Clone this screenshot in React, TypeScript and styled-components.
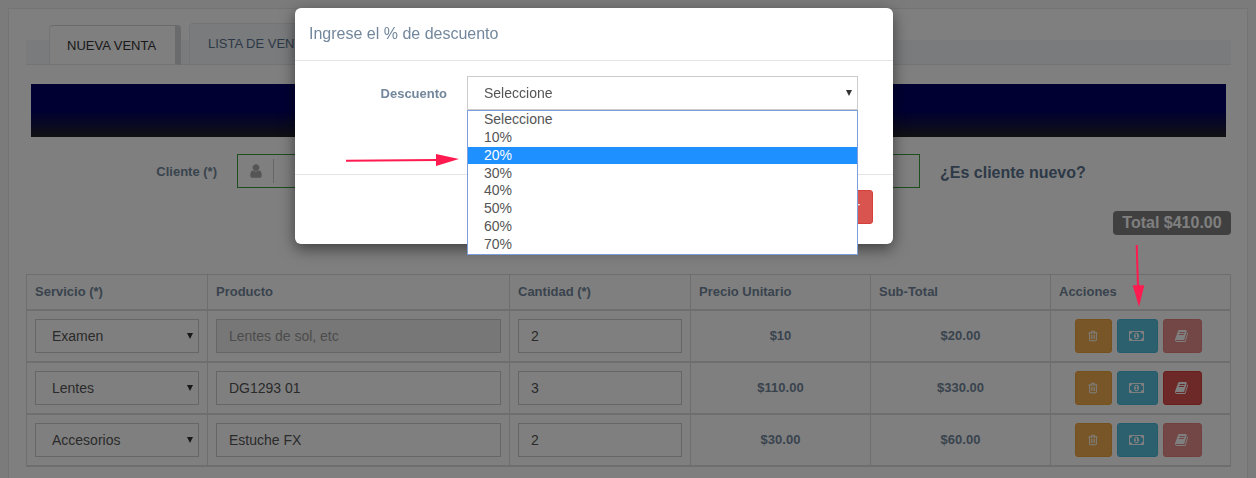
import styled, { createGlobalStyle } from 'styled-components';

const GlobalStyle = createGlobalStyle`
  html, body {
    margin: 0;
    height: 100%;
    overflow: hidden;
    background: #f7f7f7;
    color: #73879c;
    font-family: "Liberation Sans", Arial, sans-serif;
    font-size: 13px;
  }
`;

const rows = [
  { servicio: 'Examen', producto: '', cantidad: '2', precio: '$10', sub: '$20.00', locked: true },
  { servicio: 'Lentes', producto: 'DG1293 01', cantidad: '3', precio: '$110.00', sub: '$330.00', locked: false },
  { servicio: 'Accesorios', producto: 'Estuche FX', cantidad: '2', precio: '$30.00', sub: '$60.00', locked: true },
];

const opciones = ['Seleccione', '10%', '20%', '30%', '40%', '50%', '60%', '70%'];

function TrashIcon() {
  return (
    <Icon viewBox="0 0 1792 1792" width="12" height="12">
      <path d="M704 736v576q0 14-9 23t-23 9h-64q-14 0-23-9t-9-23v-576q0-14 9-23t23-9h64q14 0 23 9t9 23zm256 0v576q0 14-9 23t-23 9h-64q-14 0-23-9t-9-23v-576q0-14 9-23t23-9h64q14 0 23 9t9 23zm256 0v576q0 14-9 23t-23 9h-64q-14 0-23-9t-9-23v-576q0-14 9-23t23-9h64q14 0 23 9t9 23zm128 724v-948h-896v948q0 22 7 40.5t14.5 27 10.5 8.5h832q3 0 10.5-8.5t14.5-27 7-40.5zm-672-1076h448l-48-117q-7-9-17-11h-317q-10 2-17 11zm928 32v64q0 14-9 23t-23 9h-96v948q0 83-47 143.5t-113 60.5h-832q-66 0-113-58.5t-47-141.5v-952h-96q-14 0-23-9t-9-23v-64q0-14 9-23t23-9h309l70-167q15-37 54-63t79-26h320q40 0 79 26t54 63l70 167h309q14 0 23 9t9 23z" />
    </Icon>
  );
}

function MoneyIcon() {
  return (
    <Icon viewBox="0 0 2048 1792" width="16" height="14">
      <path d="M768 1152h384v-96h-128v-448h-114l-148 137 77 80q42-37 55-57h2v288h-128v96zm512-256q0 70-21 142t-59.5 134-101.5 101.5-138 39.5-138-39.5-101.5-101.5-59.5-134-21-142 21-142 59.5-134 101.5-101.5 138-39.5 138 39.5 101.5 101.5 59.5 134 21 142zm512 256v-512q-106 0-181-75t-75-181h-1152q0 106-75 181t-181 75v512q106 0 181 75t75 181h1152q0-106 75-181t181-75zm128-832v1152q0 26-19 45t-45 19h-1792q-26 0-45-19t-19-45v-1152q0-26 19-45t45-19h1792q26 0 45 19t19 45z" />
    </Icon>
  );
}

function BookIcon() {
  return (
    <Icon viewBox="0 0 1792 1792" width="14" height="14">
      <path d="M1639 478q40 57 18 129l-275 906q-19 64-76.5 107.5t-122.5 43.5h-923q-77 0-148.5-53.5t-99.5-131.5q-24-67-2-127 0-4 3-27t4-37q1-8-3-21.5t-3-19.5q2-11 8-21t16.5-23.5 16.5-23.5q23-38 45-91.5t30-91.5q3-10 .5-30t-.5-28q3-11 17-28t17-23q21-36 42-92t25-90q1-9-2.5-32t.5-28q4-13 22-30.5t22-22.5q19-26 42.5-84.5t27.5-96.5q1-8-3-25.5t-2-26.5q2-8 9-18t18-23 17-21q8-12 16.5-30.5t15-35 16-36 19.5-32 26.5-23.5 36-11.5 47.5 5.5l-1 3q38-9 51-9h761q74 0 114 56t18 130l-274 906q-36 119-71.5 153.5t-128.5 34.5h-869q-27 0-38 15-11 16-1 43 24 70 144 70h923q29 0 56-15.5t35-41.5l300-987q7-22 5-57 38 15 59 43zm-1064 2q-4 13 2 22.5t20 9.5h608q13 0 25.5-9.5t16.5-22.5l21-64q4-13-2-22.5t-20-9.5h-608q-13 0-25.5 9.5t-16.5 22.5zm-83 256q-4 13 2 22.5t20 9.5h608q13 0 25.5-9.5t16.5-22.5l21-64q4-13-2-22.5t-20-9.5h-608q-13 0-25.5 9.5t-16.5 22.5z" />
    </Icon>
  );
}

export default function App() {
  return (
    <>
      <GlobalStyle />
      <Panel>
        <TabBar>
          <ActiveTab>NUEVA VENTA</ActiveTab>
          <Tab>LISTA DE VENTAS</Tab>
        </TabBar>
        <Banner />
        <ClientRow>
          <ClientLabel>Cliente (*)</ClientLabel>
          <ClientGroup>
            <ClientAddon>
              <Icon viewBox="0 0 1792 1792" width="16" height="16">
                <path d="M1536 1399q0 109-62.5 187t-150.5 78h-854q-88 0-150.5-78t-62.5-187q0-85 8.5-160.5t31.5-152 58.5-131 94-89 134.5-34.5q131 128 313 128t313-128q76 0 134.5 34.5t94 89 58.5 131 31.5 152 8.5 160.5zm-256-887q0 159-112.5 271.5t-271.5 112.5-271.5-112.5-112.5-271.5 112.5-271.5 271.5-112.5 271.5 112.5 112.5 271.5z" />
              </Icon>
            </ClientAddon>
          </ClientGroup>
          <NewClient>¿Es cliente nuevo?</NewClient>
        </ClientRow>
        <TotalRow>
          <TotalBadge>Total $410.00</TotalBadge>
        </TotalRow>
        <Table>
          <colgroup>
            <col width="181" />
            <col width="302" />
            <col width="181" />
            <col width="180" />
            <col width="180" />
            <col width="180" />
          </colgroup>
          <thead>
            <tr>
              <Th>Servicio (*)</Th>
              <Th>Producto</Th>
              <Th>Cantidad (*)</Th>
              <Th>Precio Unitario</Th>
              <Th>Sub-Total</Th>
              <Th>Acciones</Th>
            </tr>
          </thead>
          <tbody>
            {rows.map((row) => (
              <tr key={row.servicio}>
                <Td>
                  <SelectBox>
                    <FieldSelect defaultValue={row.servicio}>
                      <option>{row.servicio}</option>
                    </FieldSelect>
                  </SelectBox>
                </Td>
                <Td>
                  {row.producto ? (
                    <FieldInput defaultValue={row.producto} />
                  ) : (
                    <FieldInput disabled placeholder="Lentes de sol, etc" />
                  )}
                </Td>
                <Td>
                  <FieldInput defaultValue={row.cantidad} />
                </Td>
                <AmountCell>{row.precio}</AmountCell>
                <AmountCell>{row.sub}</AmountCell>
                <Td>
                  <Actions>
                    <ActionButton $tone="#f0ad4e" $border="#eea236" $faded={false} $width={37}>
                      <TrashIcon />
                    </ActionButton>
                    <ActionButton $tone="#5bc0de" $border="#46b8da" $faded={false} $width={41}>
                      <MoneyIcon />
                    </ActionButton>
                    <ActionButton $tone="#d9534f" $border="#d43f3a" $faded={row.locked} $width={39}>
                      <BookIcon />
                    </ActionButton>
                  </Actions>
                </Td>
              </tr>
            ))}
          </tbody>
        </Table>
      </Panel>

      <Backdrop />

      <Modal>
        <ModalHeader>Ingrese el % de descuento</ModalHeader>
        <ModalBody>
          <ModalLabel>Descuento</ModalLabel>
          <SelectWrap>
            <SelectBox>
              <FieldSelect defaultValue="Seleccione">
                <option>Seleccione</option>
              </FieldSelect>
            </SelectBox>
            <OptionList>
              {opciones.map((opcion) => (
                <OptionItem key={opcion} $active={opcion === '20%'}>
                  {opcion}
                </OptionItem>
              ))}
            </OptionList>
          </SelectWrap>
        </ModalBody>
        <ModalFooter>
          <CloseButton>Cerrar</CloseButton>
        </ModalFooter>
      </Modal>

      <ArrowRight viewBox="0 0 114 14" width="114" height="14">
        <path d="M0 7.7 L91 7" stroke="#ff1a4f" strokeWidth="2" fill="none" />
        <path d="M90 1 L113 6 L90 13 Z" fill="#ff1a4f" />
      </ArrowRight>
      <ArrowDown viewBox="0 0 15 64" width="15" height="64">
        <path d="M5.7 1 L7 42" stroke="#ff1a4f" strokeWidth="2" fill="none" />
        <path d="M1.7 41.3 L13.3 41.3 L8 62.7 Z" fill="#ff1a4f" />
      </ArrowDown>
    </>
  );
}

const Icon = styled.svg`
  display: block;
  fill: currentColor;
`;

const Panel = styled.div`
  box-sizing: border-box;
  width: 1240px;
  height: 470px;
  margin: 8px 0 0 8px;
  padding: 15px 16px 0 17px;
  background: #fff;
  border: 1px solid #e6e9ed;
  border-bottom: 0;
`;

const TabBar = styled.div`
  display: flex;
  align-items: flex-end;
  gap: 8px;
  box-sizing: border-box;
  height: 41px;
  padding-left: 23px;
  background: linear-gradient(to bottom, transparent 16px, #f5f7fa 16px);
  border-bottom: 1px solid #e6e9ed;
`;

const ActiveTab = styled.div`
  box-sizing: border-box;
  width: 132px;
  height: 40px;
  margin-bottom: -1px;
  padding: 12px 0 0 17px;
  background: #fff;
  color: #333;
  border: 1px solid #e6e9ed;
  border-top: 1px solid #d3d6da;
  border-right: 6px solid #d3d6da;
  border-radius: 4px 4px 0 0;
`;

const Tab = styled.div`
  box-sizing: border-box;
  width: 190px;
  height: 41px;
  padding: 12px 0 0 18px;
  background: #f5f7fa;
  color: #5a738e;
  border: 1px solid #e6e9ed;
  border-bottom: 0;
  border-radius: 4px 4px 0 0;
`;

const Banner = styled.div`
  height: 53px;
  margin: 19px 5px 0;
  background: linear-gradient(to bottom, #000066 50%, #222228 100%);
`;

const ClientRow = styled.div`
  display: flex;
  align-items: center;
  height: 34px;
  margin-top: 17px;
`;

const ClientLabel = styled.label`
  width: 191px;
  text-align: right;
  font-weight: 700;
`;

const ClientGroup = styled.div`
  box-sizing: border-box;
  display: flex;
  align-items: center;
  width: 683px;
  height: 34px;
  margin-left: 20px;
  background: #fff;
  border: 1px solid #3c9a3c;
`;

const ClientAddon = styled.div`
  box-sizing: border-box;
  display: flex;
  align-items: center;
  justify-content: center;
  width: 36px;
  height: 24px;
  color: #aaa;
  border-right: 1px solid #ccc;
`;

const NewClient = styled.a`
  margin: 3px 0 0 20px;
  color: #5a738e;
  font-size: 16px;
  font-weight: 700;
`;

const TotalRow = styled.div`
  display: flex;
  justify-content: flex-end;
  margin-top: 23px;
`;

const TotalBadge = styled.span`
  box-sizing: border-box;
  width: 118px;
  height: 24px;
  line-height: 23px;
  text-align: center;
  background: #808080;
  color: #fff;
  font-size: 16px;
  font-weight: 700;
  border-radius: 4px;
`;

const Table = styled.table`
  width: 1205px;
  margin-top: 39px;
  table-layout: fixed;
  border-collapse: collapse;
  border: 1px solid #ddd;
`;

const Th = styled.th`
  box-sizing: border-box;
  height: 35px;
  padding: 0 8px;
  text-align: left;
  font-size: 13px;
  font-weight: 700;
  border: 1px solid #ddd;
  border-bottom: 2px solid #ddd;
`;

const Td = styled.td`
  box-sizing: border-box;
  height: 52px;
  padding: 8px;
  border: 1px solid #ddd;
  border-bottom: 2px solid #ddd;
`;

const AmountCell = styled(Td)`
  text-align: center;
  font-weight: 700;
`;

const Actions = styled.div`
  display: flex;
  justify-content: center;
  gap: 5px;
  padding-right: 5px;
`;

const controlBase = `
  display: block;
  box-sizing: border-box;
  width: 100%;
  height: 34px;
  padding: 6px 12px;
  background: #fff;
  color: #555;
  font-family: "Liberation Sans", Arial, sans-serif;
  font-size: 14px;
  border: 1px solid #ccc;
  border-radius: 0;
`;

const SelectBox = styled.div`
  position: relative;

  &::after {
    content: '';
    position: absolute;
    top: 14px;
    right: 6px;
    border-left: 3px solid transparent;
    border-right: 3px solid transparent;
    border-top: 6px solid #333;
    pointer-events: none;
  }
`;

const FieldSelect = styled.select`
  ${controlBase}
  appearance: none;
  padding-left: 16px;
`;

const FieldInput = styled.input`
  ${controlBase}

  &:disabled {
    background: #eee;
  }

  &::placeholder {
    color: #999;
  }
`;

const ActionButton = styled.div<{ $tone: string; $border: string; $faded: boolean; $width: number }>`
  box-sizing: border-box;
  display: flex;
  align-items: center;
  justify-content: center;
  width: ${(p) => p.$width}px;
  height: 34px;
  color: #fff;
  background: ${(p) => p.$tone};
  border: 1px solid ${(p) => p.$border};
  border-radius: 3px;
  opacity: ${(p) => (p.$faded ? 0.65 : 1)};
`;

const Backdrop = styled.div`
  position: fixed;
  inset: 0;
  background: rgba(0, 0, 0, 0.5);
`;

const Modal = styled.div`
  position: absolute;
  top: 8px;
  left: 295px;
  display: flex;
  flex-direction: column;
  width: 598px;
  height: 236px;
  box-sizing: border-box;
  background: #fff;
  border-radius: 6px;
  box-shadow: 0 5px 15px rgba(0, 0, 0, 0.5);
`;

const ModalHeader = styled.div`
  box-sizing: border-box;
  height: 53px;
  padding: 16px 14px 0;
  font-size: 16px;
  line-height: 20px;
  border-bottom: 1px solid #e5e5e5;
`;

const ModalBody = styled.div`
  box-sizing: border-box;
  display: flex;
  height: 114px;
  padding-top: 15px;
  border-bottom: 1px solid #e5e5e5;
`;

const ModalLabel = styled.label`
  width: 152px;
  padding-top: 10px;
  text-align: right;
  font-weight: 700;
`;

const SelectWrap = styled.div`
  position: relative;
  width: 391px;
  height: 34px;
  margin-left: 20px;
`;

const OptionList = styled.div`
  position: absolute;
  top: 34px;
  left: 0;
  right: 0;
  box-sizing: border-box;
  display: grid;
  grid-auto-rows: 17.75px;
  height: 145px;
  background: #fff;
  color: #555;
  font-size: 14px;
  border: 1px solid #7f9fdc;
  z-index: 2;
`;

const OptionItem = styled.div<{ $active: boolean }>`
  display: flex;
  align-items: center;
  padding: 0 0 1px 16px;
  background: ${(p) => (p.$active ? '#1e90ff' : 'transparent')};
  color: ${(p) => (p.$active ? '#fff' : '#555')};
`;

const ModalFooter = styled.div`
  display: flex;
  justify-content: flex-end;
  padding: 15px 20px 0 0;
`;

const CloseButton = styled.div`
  box-sizing: border-box;
  height: 34px;
  padding: 6px 12px;
  background: #d9534f;
  color: #fff;
  font-size: 14px;
  line-height: 20px;
  border: 1px solid #d43f3a;
  border-radius: 3px;
`;

const ArrowRight = styled.svg`
  position: absolute;
  top: 153px;
  left: 346px;
  overflow: visible;
`;

const ArrowDown = styled.svg`
  position: absolute;
  top: 244px;
  left: 1131px;
  overflow: visible;
`;
